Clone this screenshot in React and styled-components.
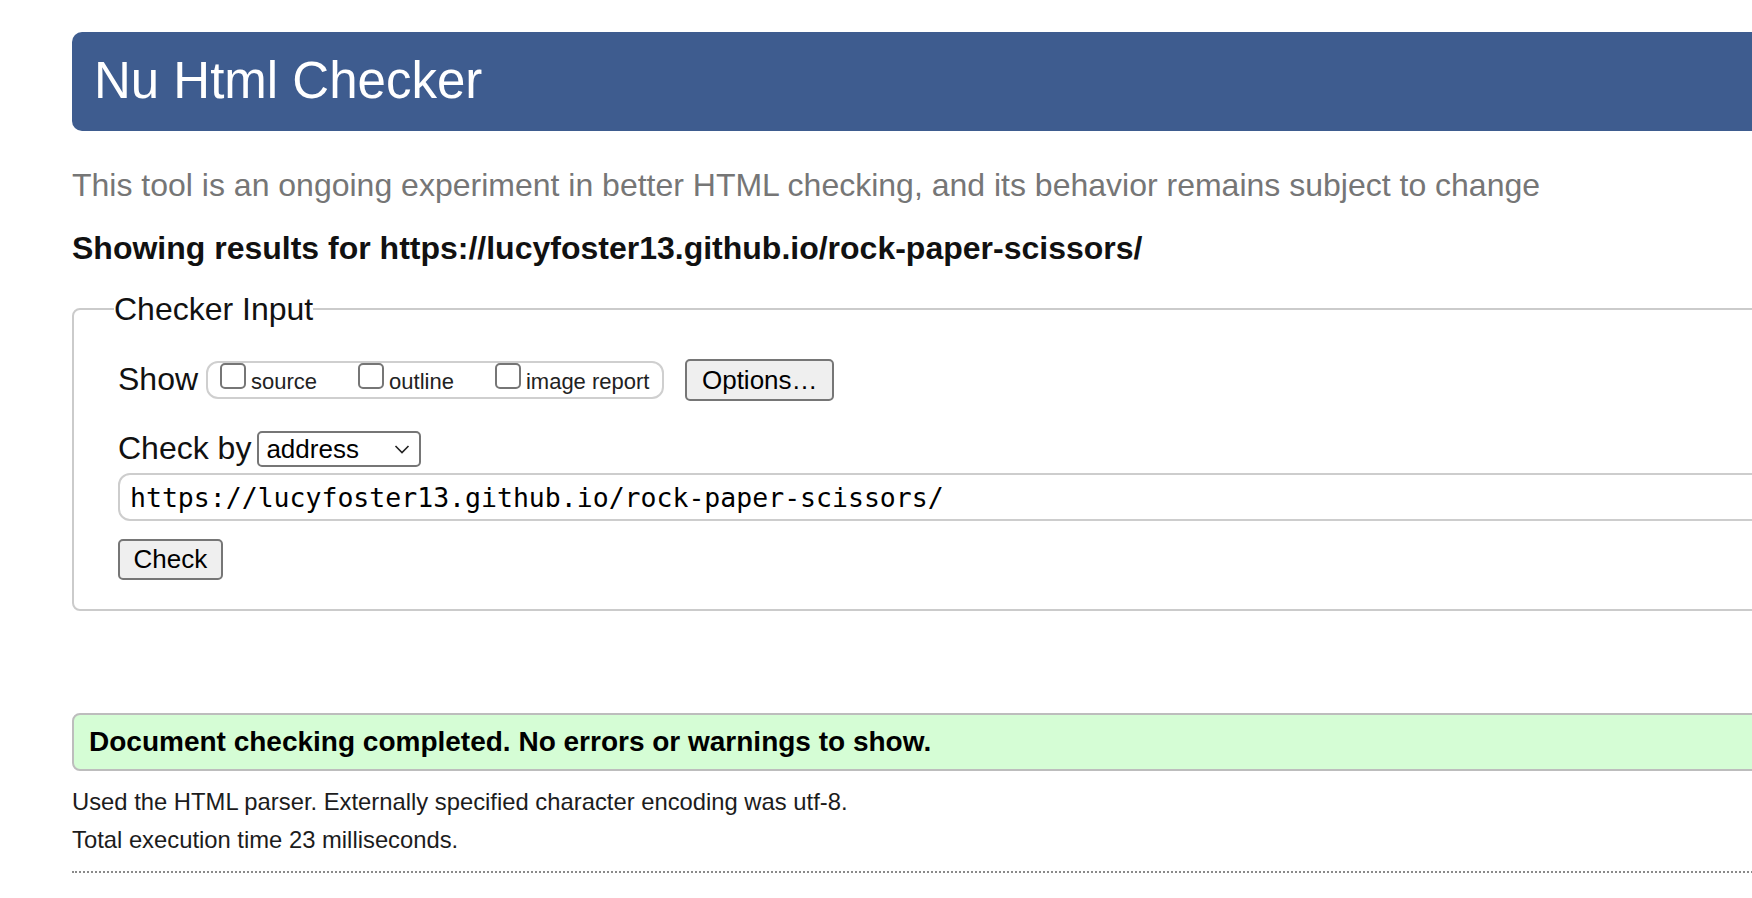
import React from "react";
import styled, { createGlobalStyle } from "styled-components";

const GlobalStyle = createGlobalStyle`
  html, body {
    margin: 0;
    padding: 0;
    background: #fff;
    overflow: hidden;
  }
  body {
    font-family: "Liberation Sans", Arial, Helvetica, sans-serif;
    color: #111;
  }
`;

// the page is wider than the window, everything runs off the right edge
const Page = styled.main`
  width: 1720px;
  padding: 32px 0 0 72px;
`;

const Masthead = styled.h1`
  margin: 0;
  height: 99px;
  padding-left: 22px;
  background: #3e5c8f;
  border-radius: 10px;
  color: #fff;
  font-size: 51px;
  font-weight: normal;
  line-height: 98px;
`;

const Intro = styled.p`
  margin: 36px 0 0;
  font-size: 32px;
  line-height: 36px;
  color: #767676;
`;

const ResultsFor = styled.p`
  margin: 27px 0 0;
  font-size: 32px;
  font-weight: bold;
  line-height: 36px;
  color: #111;
`;

const Fieldset = styled.fieldset`
  margin: 25px 0 0;
  min-width: 0;
  padding: 32px 0 29px 44px;
  border: 2px solid #cbcbcb;
  border-radius: 8px;
`;

const Legend = styled.legend`
  margin-left: -4px;
  padding: 0;
  font-size: 32px;
  line-height: 36px;
  color: #111;
`;

const Row = styled.div`
  display: flex;
  align-items: center;
  height: ${(p) => (p.$h ? `${p.$h}px` : "auto")};
  margin-top: ${(p) => p.$top || 0}px;
`;

const RowLabel = styled.span`
  margin-bottom: 2px;
  font-size: 32px;
  line-height: 30px;
  color: #111;
`;

const ShowGroup = styled.div`
  margin-left: 8px;
  padding: 0 13px 3.6px 12px;
  border: 2px solid #cfcfcf;
  border-radius: 12px;
  font-size: 22px;
  line-height: 22px;
  white-space: nowrap;
  color: #222;
`;

const Option = styled.label`
  display: inline-block;
  margin-right: ${(p) => (p.$last ? 0 : 41)}px;
`;

const Tick = styled.span`
  display: inline-block;
  box-sizing: border-box;
  width: 26px;
  height: 26px;
  margin-right: 5px;
  border: 2px solid #767676;
  border-radius: 5px;
  background: #fff;
  vertical-align: baseline;
`;

const Button = styled.button`
  display: block;
  margin-left: ${(p) => p.$left || 0}px;
  padding: 0 ${(p) => p.$pad}px;
  border: 2px solid #767676;
  border-radius: 5px;
  background: #efefef;
  color: #000;
  font-family: inherit;
  font-size: 26px;
  line-height: ${(p) => p.$line}px;
`;

const Select = styled.div`
  display: flex;
  align-items: center;
  justify-content: space-between;
  box-sizing: border-box;
  width: 164px;
  height: 36px;
  margin-left: 6px;
  padding: 0 9px 0 7px;
  border: 2px solid #767676;
  border-radius: 5px;
  background: #fff;
  color: #000;
  font-size: 26px;
  line-height: 32px;
`;

const UrlInput = styled.input`
  display: block;
  box-sizing: border-box;
  width: 100%;
  height: 48px;
  margin: 6px 0 0;
  padding: 0 10px;
  border: 2px solid #cdcdcd;
  border-radius: 12px;
  background: #fff;
  color: #000;
  font-family: "DejaVu Sans Mono", Menlo, monospace;
  font-size: 26.5px;
  line-height: 44px;
  outline: none;
`;

const CheckWrap = styled.div`
  margin-top: 18px;
`;

const Success = styled.div`
  box-sizing: border-box;
  height: 58px;
  margin-top: 102px;
  padding: 0 15px;
  border: 2px solid #bdbdbd;
  border-radius: 8px;
  background: #d5fdd5;
  color: #000;
  font-size: 28px;
  font-weight: bold;
  line-height: 54px;
`;

const Detail = styled.p`
  margin: ${(p) => p.$top}px 0 0;
  font-size: 23.8px;
  line-height: 28px;
  color: #1c1c1c;
`;

const Rule = styled.div`
  margin-top: 17px;
  border-top: 2px dotted #8a8a8a;
`;

const Chevron = () => (
  <svg width="16" height="10" viewBox="0 0 16 10" fill="none">
    <path d="M1.5 2 L8 8.5 L14.5 2" stroke="#222" strokeWidth="1.6" />
  </svg>
);

const url = "https://lucyfoster13.github.io/rock-paper-scissors/";

const options = ["source", "outline", "image report"];

export default function App() {
  return (
    <>
      <GlobalStyle />
      <Page>
        <Masthead>Nu Html Checker</Masthead>
        <Intro>
          This tool is an ongoing experiment in better HTML checking, and its
          behavior remains subject to change
        </Intro>
        <ResultsFor>Showing results for {url}</ResultsFor>

        <Fieldset>
          <Legend>Checker Input</Legend>
          <Row>
            <RowLabel>Show</RowLabel>
            <ShowGroup>
              {options.map((name, i) => (
                <Option key={name} $last={i === options.length - 1}>
                  <Tick />
                  {name}
                </Option>
              ))}
            </ShowGroup>
            <Button $left={21} $pad={14.5} $line={38}>
              Options…
            </Button>
          </Row>
          <Row $h={36} $top={30}>
            <RowLabel>Check by</RowLabel>
            <Select>
              <span>address</span>
              <Chevron />
            </Select>
          </Row>
          <UrlInput readOnly value={url} />
          <CheckWrap>
            <Button $pad={13.6} $line={37}>
              Check
            </Button>
          </CheckWrap>
        </Fieldset>

        <Success>Document checking completed. No errors or warnings to show.</Success>
        <Detail $top={17}>
          Used the HTML parser. Externally specified character encoding was
          utf-8.
        </Detail>
        <Detail $top={10}>Total execution time 23 milliseconds.</Detail>
        <Rule />
      </Page>
    </>
  );
}
